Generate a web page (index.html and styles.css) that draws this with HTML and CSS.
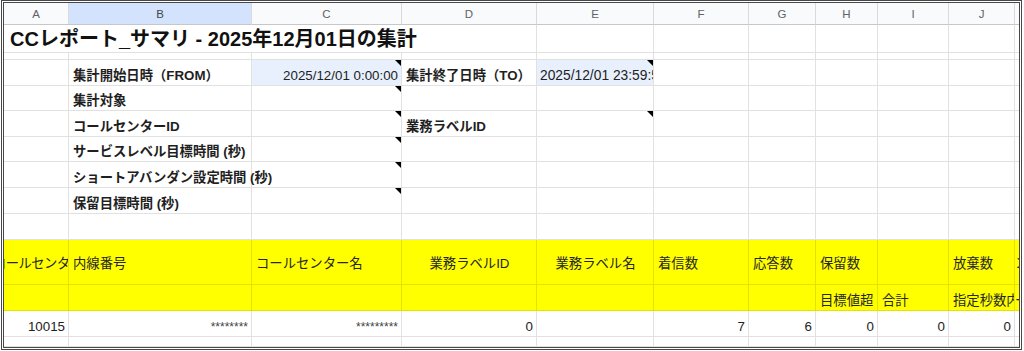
FILE: index.html
```html
<!DOCTYPE html>
<html lang="ja">
<head>
<meta charset="utf-8">
<title>CCレポート_サマリ</title>
<link rel="stylesheet" href="styles.css">
</head>
<body>
<div class="frame">
  <div class="sheet">
    <!-- column headers -->
    <div class="c hd">A</div>
    <div class="c hd sel">B</div>
    <div class="c hd">C</div>
    <div class="c hd">D</div>
    <div class="c hd">E</div>
    <div class="c hd">F</div>
    <div class="c hd">G</div>
    <div class="c hd">H</div>
    <div class="c hd">I</div>
    <div class="c hd">J</div>
    <div class="c hd"></div>

    <!-- title row -->
    <div class="c title">CCレポート_サマリ - 2025年12月01日の集計</div>
    <div class="c"></div><div class="c"></div><div class="c"></div><div class="c"></div><div class="c"></div><div class="c"></div><div class="c"></div>

    <!-- thin row -->
    <div class="c"></div><div class="c"></div><div class="c"></div><div class="c"></div><div class="c"></div><div class="c"></div><div class="c"></div><div class="c"></div><div class="c"></div><div class="c"></div><div class="c"></div>

    <!-- r1 -->
    <div class="c"></div>
    <div class="c lbl">集計開始日時（FROM）</div>
    <div class="c blue num note">2025/12/01 0:00:00</div>
    <div class="c lbl">集計終了日時（TO）</div>
    <div class="c blue note clip">2025/12/01 23:59:59</div>
    <div class="c"></div><div class="c"></div><div class="c"></div><div class="c"></div><div class="c"></div><div class="c"></div>

    <!-- r2 -->
    <div class="c"></div>
    <div class="c lbl">集計対象</div>
    <div class="c note"></div>
    <div class="c"></div><div class="c"></div><div class="c"></div><div class="c"></div><div class="c"></div><div class="c"></div><div class="c"></div><div class="c"></div>

    <!-- r3 -->
    <div class="c"></div>
    <div class="c lbl">コールセンターID</div>
    <div class="c note"></div>
    <div class="c lbl">業務ラベルID</div>
    <div class="c note"></div>
    <div class="c"></div><div class="c"></div><div class="c"></div><div class="c"></div><div class="c"></div><div class="c"></div>

    <!-- r4 -->
    <div class="c"></div>
    <div class="c lbl">サービスレベル目標時間 (秒)</div>
    <div class="c note"></div>
    <div class="c"></div><div class="c"></div><div class="c"></div><div class="c"></div><div class="c"></div><div class="c"></div><div class="c"></div><div class="c"></div>

    <!-- r5 -->
    <div class="c"></div>
    <div class="c lbl">ショートアバンダン設定時間 (秒)</div>
    <div class="c note"></div>
    <div class="c"></div><div class="c"></div><div class="c"></div><div class="c"></div><div class="c"></div><div class="c"></div><div class="c"></div><div class="c"></div>

    <!-- r6 -->
    <div class="c"></div>
    <div class="c lbl">保留目標時間 (秒)</div>
    <div class="c note"></div>
    <div class="c"></div><div class="c"></div><div class="c"></div><div class="c"></div><div class="c"></div><div class="c"></div><div class="c"></div><div class="c"></div>

    <!-- r7 -->
    <div class="c"></div><div class="c"></div><div class="c"></div><div class="c"></div><div class="c"></div><div class="c"></div><div class="c"></div><div class="c"></div><div class="c"></div><div class="c"></div><div class="c"></div>

    <!-- yellow header 1 -->
    <div class="c y mid"><span class="shift">コールセンター</span></div>
    <div class="c y mid">内線番号</div>
    <div class="c y mid">コールセンター名</div>
    <div class="c y mid ctr">業務ラベルID</div>
    <div class="c y mid ctr">業務ラベル名</div>
    <div class="c y mid">着信数</div>
    <div class="c y mid">応答数</div>
    <div class="c y mid">保留数</div>
    <div class="c y mid"></div>
    <div class="c y mid">放棄数</div>
    <div class="c y mid tight">ン</div>

    <!-- yellow header 2 -->
    <div class="c y"></div>
    <div class="c y"></div>
    <div class="c y"></div>
    <div class="c y"></div>
    <div class="c y"></div>
    <div class="c y"></div>
    <div class="c y"></div>
    <div class="c y">目標値超</div>
    <div class="c y">合計</div>
    <div class="c y">指定秒数内</div>
    <div class="c y tight">ー</div>

    <!-- data row -->
    <div class="c num">10015</div>
    <div class="c num star">********</div>
    <div class="c num star">*********</div>
    <div class="c num">0</div>
    <div class="c"></div>
    <div class="c num">7</div>
    <div class="c num">6</div>
    <div class="c num">0</div>
    <div class="c num">0</div>
    <div class="c num">0</div>
    <div class="c"></div>

    <!-- last partial row -->
    <div class="c"></div><div class="c"></div><div class="c"></div><div class="c"></div><div class="c"></div><div class="c"></div><div class="c"></div><div class="c"></div><div class="c"></div><div class="c"></div><div class="c"></div>
  </div>
</div>
</body>
</html>
```

FILE: styles.css
```css
* { box-sizing: border-box; }

html, body {
  margin: 0;
  padding: 0;
  background: #ffffff;
}

body {
  font-family: "Liberation Sans", "Noto Sans CJK JP", sans-serif;
  font-size: 13.33px;
  color: #222222;
}

.frame {
  margin-left: 1px;
  width: 1021px;
  height: 350px;
  border: 3px double #474747;
  overflow: hidden;
  background: #ffffff;
}

.sheet {
  display: grid;
  grid-template-columns: 65px 183px 150px 135px 117px 95px 67px 62px 71px 66px 1fr;
  grid-template-rows: 22px 28px 7px 26px 25px 26px 25px 26px 26px 26px 45px 26px 26px 1fr;
  height: 100%;
}

.c {
  position: relative;
  border-right: 1px solid #e1e1e1;
  border-bottom: 1px solid #e1e1e1;
  padding: 0 3px 1px 4px;
  white-space: nowrap;
  overflow: hidden;
  display: flex;
  align-items: flex-end;
  line-height: 16px;
}

.hd {
  justify-content: center;
  align-items: center;
  padding: 0;
  font-size: 11.5px;
  color: #5f6368;
  background: #f9fafb;
  border-bottom: 1px solid #c7c7c7;
  border-right: 1px solid #dadada;
}

.hd.sel {
  background: #d3e3fd;
  color: #444746;
}

.title {
  grid-column: span 4;
  align-items: center;
  padding: 0 0 0 6px;
  font-size: 20px;
  font-weight: 700;
  color: #111111;
  line-height: 24px;
}

.lbl {
  font-weight: 700;
  color: #1f1f1f;
  overflow: visible;
}

.blue {
  background: #e8f0fe;
}

.clip {
  padding-left: 3px;
  font-size: 13.8px;
}

.num {
  justify-content: flex-end;
}

.star {
  color: #444444;
  font-size: 12px;
}

.note::after {
  content: "";
  position: absolute;
  top: 0;
  right: 0;
  width: 0;
  height: 0;
  border-top: 6px solid #000000;
  border-left: 6px solid transparent;
}

.y {
  background: #ffff00;
  border-right-color: #e3e300;
  border-bottom-color: #e3e300;
  color: #262626;
}

.y.mid {
  align-items: center;
  padding-top: 4px;
  padding-bottom: 0;
}

.y.ctr {
  justify-content: center;
}

.shift {
  margin-left: -15px;
  letter-spacing: -0.6px;
}

.tight {
  padding-left: 0;
}
```
